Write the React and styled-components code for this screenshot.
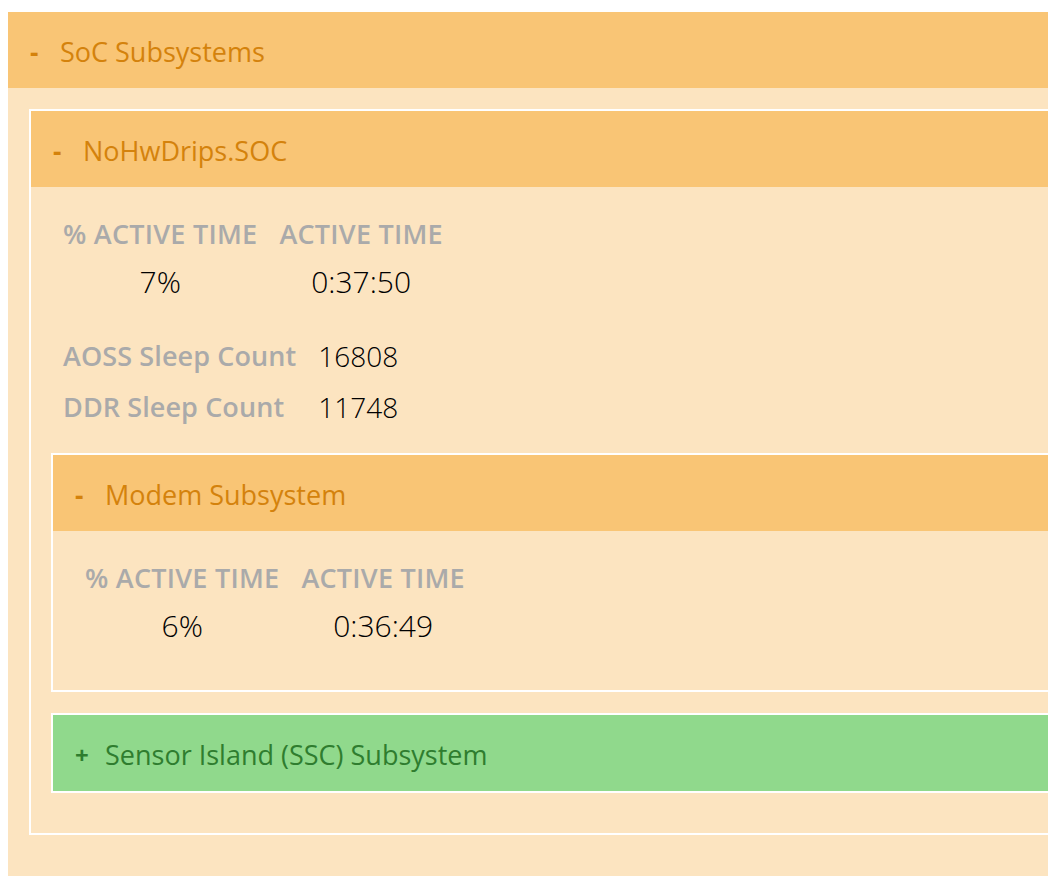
import React from "react";
import styled, { createGlobalStyle } from "styled-components";

const GlobalStyle = createGlobalStyle`
  body {
    margin: 8px 0 8px 8px;
    background: #ffffff;
    font-family: "Open Sans", "Noto Sans", sans-serif;
  }
`;

const Page = styled.div`
  padding-top: 4px;
`;

const Panel = styled.div`
  background-color: #fce4c0;
  border: ${(p) => (p.$nested ? "2px solid #ffffff" : "none")};
  border-right: none;
  & + & {
    margin-top: 21px;
  }
`;

const Header = styled.div`
  height: 76px;
  box-sizing: border-box;
  display: flex;
  align-items: center;
  padding: 3px 0 0 22px;
  background-color: ${(p) => (p.$green ? "#90d98c" : "#f9c575")};
  color: ${(p) => (p.$green ? "#2f7d2f" : "#d4820c")};
  font-size: 27px;
  white-space: nowrap;
`;

const Toggle = styled.span`
  width: 30px;
  font-weight: 700;
  font-size: ${(p) => (p.$plus ? "24px" : "26px")};
`;

const Title = styled.span``;

const Body = styled.div`
  padding: ${(p) => p.$pad || "30px 0 40px 20px"};
`;

const Stats = styled.div`
  display: grid;
  grid-template-columns: auto auto;
  justify-content: start;
  column-gap: 22px;
  row-gap: 11px;
  padding-left: 12px;
`;

const Label = styled.div`
  font-size: 27px;
  font-weight: 600;
  letter-spacing: 0.25px;
  line-height: 34px;
  color: #aaaaaa;
  text-transform: uppercase;
  white-space: nowrap;
`;

const Value = styled.div`
  font-size: 30px;
  font-weight: 300;
  line-height: 40px;
  color: #000000;
  text-align: ${(p) => (p.$left ? "left" : "center")};
  white-space: nowrap;
`;

const Counts = styled(Stats)`
  margin-top: 34px;
  align-items: center;
  margin-bottom: 26px;
`;

const CountLabel = styled(Label)`
  text-transform: none;
  line-height: 40px;
  letter-spacing: 0.1px;
`;

const CountValue = styled(Value)`
  font-size: 28px;
`;

function ActiveStats({ percent, time }) {
  return (
    <Stats>
      <Label>% Active Time</Label>
      <Label>Active Time</Label>
      <Value>{percent}</Value>
      <Value>{time}</Value>
    </Stats>
  );
}

export default function App() {
  return (
    <>
      <GlobalStyle />
      <Page>
        <Panel>
          <Header>
            <Toggle>-</Toggle>
            <Title>SoC Subsystems</Title>
          </Header>
          <Body $pad="21px 0 41px 21px">
            <Panel $nested>
              <Header>
                <Toggle>-</Toggle>
                <Title>NoHwDrips.SOC</Title>
              </Header>
              <Body>
                <ActiveStats percent="7%" time="0:37:50" />
                <Counts>
                  <CountLabel>AOSS Sleep Count</CountLabel>
                  <CountValue $left>16808</CountValue>
                  <CountLabel>DDR Sleep Count</CountLabel>
                  <CountValue $left>11748</CountValue>
                </Counts>
                <Panel $nested>
                  <Header>
                    <Toggle>-</Toggle>
                    <Title>Modem Subsystem</Title>
                  </Header>
                  <Body $pad="30px 0 44px 20px">
                    <ActiveStats percent="6%" time="0:36:49" />
                  </Body>
                </Panel>
                <Panel $nested>
                  <Header $green>
                    <Toggle $plus>+</Toggle>
                    <Title>Sensor Island (SSC) Subsystem</Title>
                  </Header>
                </Panel>
              </Body>
            </Panel>
          </Body>
        </Panel>
      </Page>
    </>
  );
}
